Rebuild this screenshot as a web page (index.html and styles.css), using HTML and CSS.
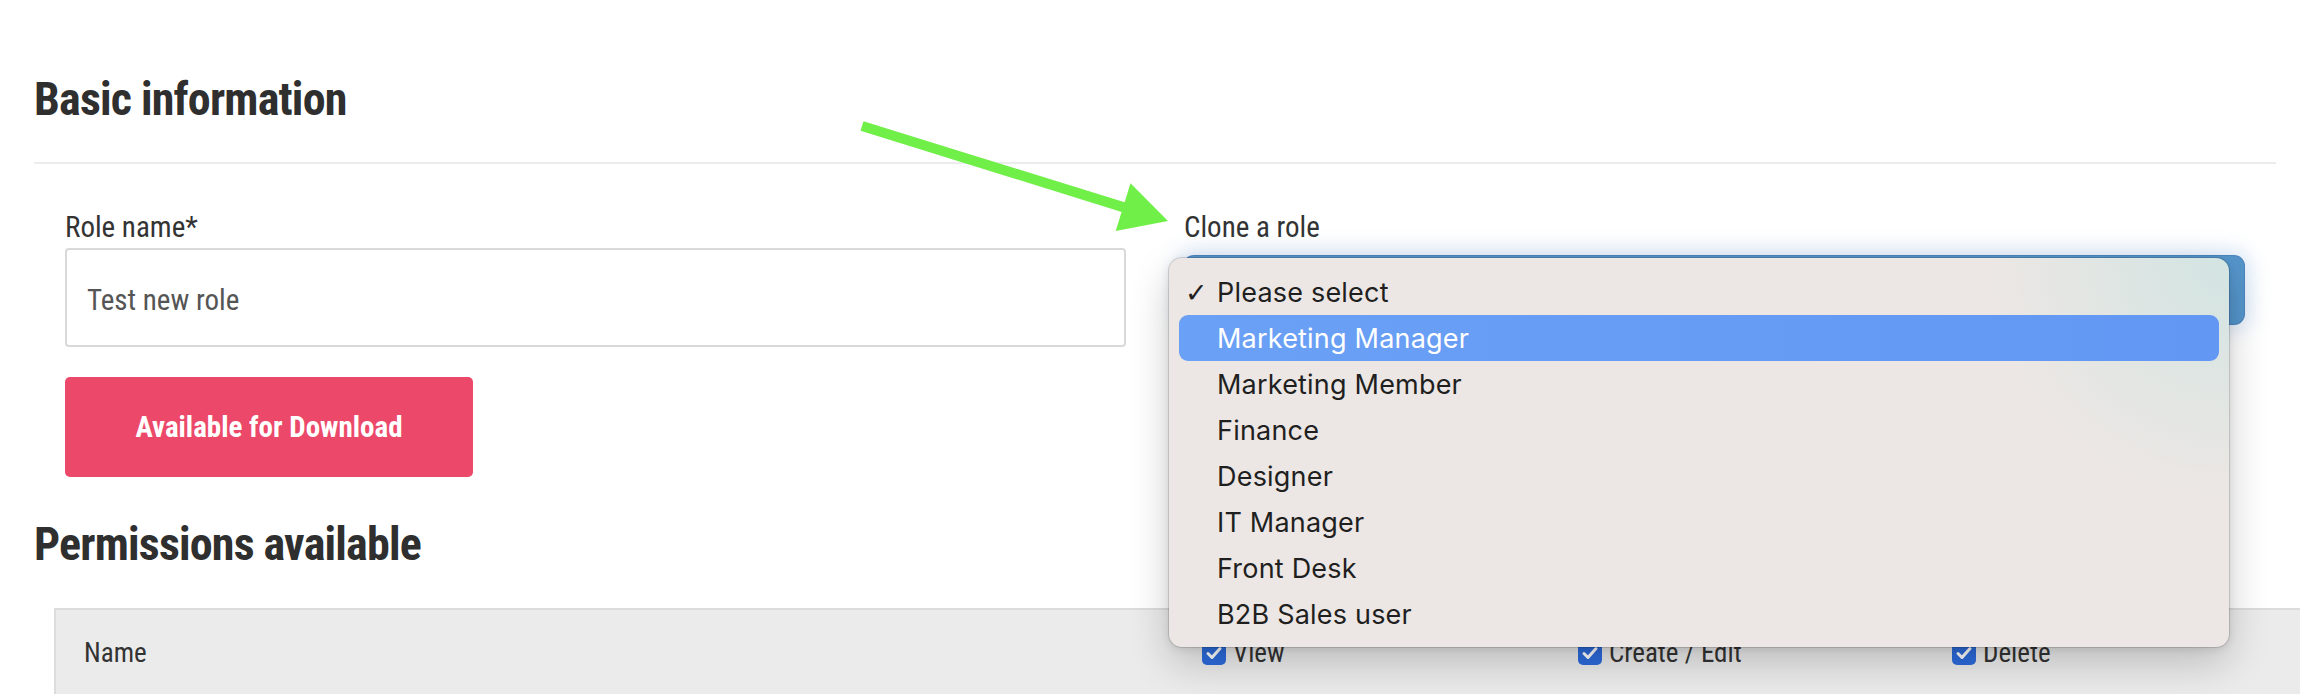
FILE: index.html
```html
<!DOCTYPE html>
<html>
<head>
<meta charset="utf-8">
<link rel="stylesheet" href="styles.css">
</head>
<body>
<div class="page">
  <h2 class="section-title">Basic information</h2>
  <hr class="divider">
  <div class="form-grid">
    <div class="field">
      <label class="label">Role name*</label>
      <div class="input">Test new role</div>
    </div>
    <div class="field">
      <label class="label">Clone a role</label>
      <div class="select-wrap">
        <div class="select"></div>
        <div class="menu">
          <div class="item"><span class="check">✓</span>Please select</div>
          <div class="item active">Marketing Manager</div>
          <div class="item">Marketing Member</div>
          <div class="item">Finance</div>
          <div class="item">Designer</div>
          <div class="item">IT Manager</div>
          <div class="item">Front Desk</div>
          <div class="item">B2B Sales user</div>
        </div>
      </div>
    </div>
  </div>
  <button class="btn">Available for Download</button>
  <h2 class="section-title perm-title">Permissions available</h2>
  <div class="table">
    <div class="thead">
      <div class="th th-name">Name</div>
      <div class="th"><span class="cb"><svg viewBox="0 0 24 24" width="24" height="24"><path d="M6 12.5l4 4 8-9" fill="none" stroke="#fff" stroke-width="3" stroke-linecap="round" stroke-linejoin="round"/></svg></span>View</div>
      <div class="th"><span class="cb"><svg viewBox="0 0 24 24" width="24" height="24"><path d="M6 12.5l4 4 8-9" fill="none" stroke="#fff" stroke-width="3" stroke-linecap="round" stroke-linejoin="round"/></svg></span>Create / Edit</div>
      <div class="th"><span class="cb"><svg viewBox="0 0 24 24" width="24" height="24"><path d="M6 12.5l4 4 8-9" fill="none" stroke="#fff" stroke-width="3" stroke-linecap="round" stroke-linejoin="round"/></svg></span>Delete</div>
    </div>
  </div>
</div>
<svg class="arrow" width="2300" height="694" viewBox="0 0 2300 694">
  <line x1="862" y1="126" x2="1128" y2="208.6" stroke="#71ef49" stroke-width="10"/>
  <polygon points="1168,221 1130.5,183.2 1115.7,231" fill="#71ef49"/>
</svg>
</body>
</html>
```

FILE: styles.css
```css
* { box-sizing: border-box; }
html, body { margin: 0; padding: 0; background: #fff; }
body {
  width: 2300px;
  height: 694px;
  overflow: hidden;
  position: relative;
  font-family: "Roboto", "DejaVu Sans Condensed", sans-serif;
  font-stretch: 80%;
  color: #333;
}
.page { padding: 71px 24px 0 34px; }
.section-title {
  margin: 0;
  font-size: 46px;
  line-height: 56px;
  font-weight: 700;
  letter-spacing: -0.8px;
  color: #2f2f2f;
}
.perm-title { margin-top: 39px; }
.divider {
  margin: 35px 0 0;
  height: 2px;
  border: 0;
  background: #ececec;
}
.form-grid {
  display: grid;
  grid-template-columns: 1061px 1060px;
  column-gap: 58px;
  margin: 45px 0 0 31px;
  align-items: start;
}
.label {
  display: block;
  font-size: 29px;
  line-height: 36px;
  color: #333;
}
.input {
  margin-top: 3px;
  height: 99px;
  border: 2px solid #d9d9d9;
  border-radius: 4px;
  padding: 4px 20px 0;
  display: flex;
  align-items: center;
  font-size: 29px;
  line-height: 36px;
  color: #555;
}
.select-wrap { position: relative; margin-top: 11px; }
.select {
  height: 68px;
  border-radius: 10px;
  background: #5595cb;
  box-shadow: 0 0 0 1px #4b86be, 0 0 20px 6px rgba(140, 185, 235, 0.32);
}
.menu {
  position: absolute;
  top: 2px;
  left: -15px;
  right: 15px;
  padding: 11px 10px 10px;
  background: radial-gradient(circle at 100% 0, #d2e4e2 0, rgba(236, 231, 228, 0) 240px), #ece7e4;
  border-radius: 13px;
  box-shadow: 0 16px 40px rgba(0, 0, 0, 0.2), 0 2px 8px rgba(0, 0, 0, 0.1), 0 0 0 1px rgba(0, 0, 0, 0.13);
  font-family: "Inter", "DejaVu Sans", sans-serif;
  font-stretch: 100%;
  font-size: 27px;
  letter-spacing: 0.2px;
  color: #1f1f1f;
}
.item {
  position: relative;
  height: 46px;
  padding-left: 38px;
  display: flex;
  align-items: center;
  border-radius: 9px;
}
.item.active {
  background: linear-gradient(90deg, #6aa0f5, #6298f3);
  color: #fff;
}
.check {
  position: absolute;
  left: 6px;
  font-family: "DejaVu Sans", sans-serif;
  font-weight: 700;
  font-size: 27px;
}
.btn {
  display: block;
  margin: 30px 0 0 31px;
  width: 408px;
  height: 100px;
  padding: 0;
  border: 0;
  border-radius: 5px;
  background: #ec4869;
  color: #fff;
  font-family: "Roboto", "DejaVu Sans Condensed", sans-serif;
  font-stretch: 80%;
  font-weight: 700;
  font-size: 29px;
  line-height: 36px;
}
.table {
  margin: 36px -40px 0 20px;
  border-top: 2px solid #dcdcdc;
  border-left: 2px solid #dcdcdc;
}
.thead {
  display: grid;
  grid-template-columns: 1120px 376px 374px 1fr;
  height: 86px;
  background: #ebebeb;
}
.th {
  display: flex;
  align-items: center;
  gap: 7px;
  padding-left: 26px;
  font-size: 27px;
  line-height: 36px;
  color: #333;
}
.th-name { padding-left: 28px; }
.cb {
  display: inline-flex;
  width: 24px;
  height: 24px;
  border-radius: 5px;
  background: #2d6bdc;
}
.arrow {
  position: absolute;
  top: 0;
  left: 0;
  pointer-events: none;
}
```
